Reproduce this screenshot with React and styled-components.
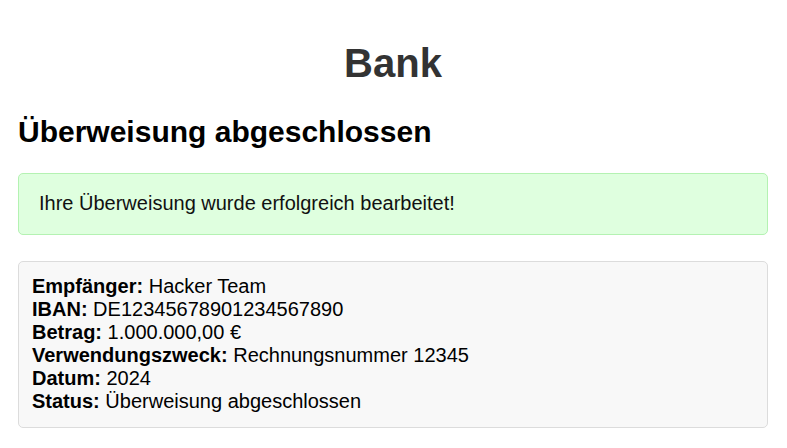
import React from 'react';
import styled, { createGlobalStyle } from 'styled-components';

const GlobalStyle = createGlobalStyle`
  html, body {
    margin: 0;
    padding: 0;
    background: #ffffff;
  }
  body {
    font-family: "Liberation Sans", Arial, sans-serif;
    color: #000;
  }
`;

const Page = styled.div`
  padding: 41px 19px 0 18px;
`;

const Title = styled.h1`
  margin: 0 0 29px;
  font-size: 40px;
  font-weight: 700;
  text-align: center;
  color: #333;
`;

const Heading = styled.h2`
  margin: 0 0 24px;
  font-size: 30px;
  font-weight: 700;
  color: #000;
`;

const Notice = styled.div`
  padding: 18px 20px 19px;
  border: 1px solid #b4f2b2;
  border-radius: 5px;
  background: #dfffdf;
  font-size: 20px;
  color: #111;
  margin-bottom: 26px;
`;

const Details = styled.div`
  padding: 13px 13px 14px;
  border: 1px solid #dcdcdc;
  border-radius: 5px;
  background: #f8f8f8;
  font-size: 20px;
  color: #000;
`;

const Line = styled.div`
  white-space: nowrap;
`;

const Label = styled.strong`
  font-weight: 700;
`;

const rows = [
  ['Empfänger:', 'Hacker Team'],
  ['IBAN:', 'DE12345678901234567890'],
  ['Betrag:', '1.000.000,00 €'],
  ['Verwendungszweck:', 'Rechnungsnummer 12345'],
  ['Datum:', '2024'],
  ['Status:', 'Überweisung abgeschlossen'],
];

const App = () => {
  return (
    <>
      <GlobalStyle />
      <Page>
        <Title>Bank</Title>
        <Heading>Überweisung abgeschlossen</Heading>
        <Notice>Ihre Überweisung wurde erfolgreich bearbeitet!</Notice>
        <Details>
          {rows.map(([label, value]) => (
            <Line key={label}>
              <Label>{label}</Label> {value}
            </Line>
          ))}
        </Details>
      </Page>
    </>
  );
};

export default App;
